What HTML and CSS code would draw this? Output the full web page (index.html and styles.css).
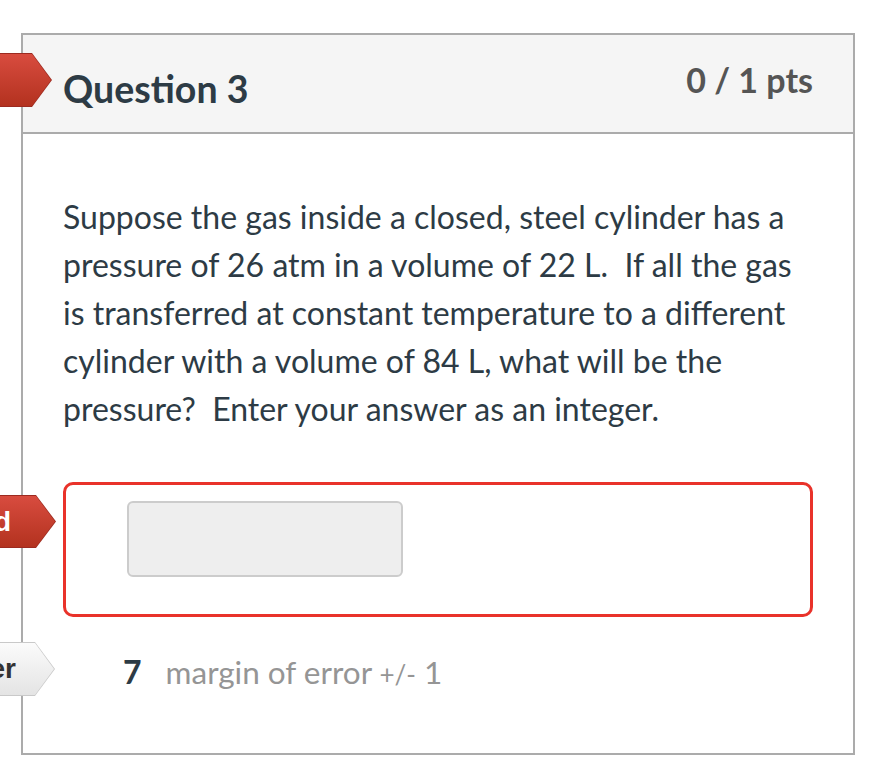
FILE: index.html
```html
<!DOCTYPE html>
<html lang="en">
<head>
<meta charset="utf-8">
<title>Question 3</title>
<link rel="stylesheet" href="styles.css">
</head>
<body>
<div class="question">
  <div class="q-header">
    <span class="tag tag-red tag-incorrect"><span class="tag-inner">Incorrect</span></span>
    <h2 class="q-title">Question 3</h2>
    <div class="q-points">0 / 1 pts</div>
  </div>
  <div class="q-text">
    <p>Suppose the gas inside a closed, steel cylinder has a pressure of 26 atm in a volume of 22 L.&nbsp; If all the gas is transferred at constant temperature to a different cylinder with a volume of 84 L, what will be the pressure?&nbsp; Enter your answer as an integer.</p>
  </div>
  <div class="answer-wrap">
    <span class="tag tag-red tag-answered"><span class="tag-inner">You Answered</span></span>
    <div class="answer-box">
      <div class="answer-input"></div>
    </div>
  </div>
  <div class="correct-row">
    <span class="tag tag-gray tag-correct"><span class="tag-inner">Correct Answer</span></span>
    <span class="correct-value">7</span>
    <span class="margin-text">margin of error <span class="pm">+/-</span> 1</span>
  </div>
</div>
</body>
</html>
```

FILE: styles.css
```css
html, body {
  margin: 0;
  padding: 0;
  background: #ffffff;
}

body {
  font-family: Lato, "Open Sans", sans-serif;
  color: #2d3b45;
  overflow: hidden;
}

.question {
  position: relative;
  box-sizing: border-box;
  width: 834px;
  height: 722px;
  margin: 33px 0 0 21px;
  border: 2px solid #ababab;
}

.q-header {
  position: relative;
  display: flex;
  justify-content: space-between;
  align-items: flex-start;
  background: #f5f5f5;
  border-bottom: 2px solid #ababab;
  padding: 25px 40px 21px 40px;
}

.q-title {
  margin: 6px 0 0 0;
  font-size: 37.5px;
  line-height: 45px;
  font-weight: 700;
  color: #2d3b45;
}

.q-points {
  font-size: 34px;
  line-height: 40px;
  font-weight: 700;
  color: #555555;
}

.q-text {
  padding: 0 40px;
  margin-top: 59px;
}

.q-text p {
  margin: 0;
  font-size: 32px;
  line-height: 48px;
  color: #2d3b45;
}

.answer-wrap {
  position: relative;
  margin-top: 49px;
  padding: 0 40px;
}

.answer-box {
  box-sizing: border-box;
  height: 135px;
  border: 3px solid #e9322a;
  border-radius: 10px;
  padding: 16px 0 0 61px;
}

.answer-input {
  box-sizing: border-box;
  width: 276px;
  height: 76px;
  background: #eeeeee;
  border: 2px solid #cccccc;
  border-radius: 6px;
}

.correct-row {
  position: relative;
  margin-top: 31px;
  padding-left: 100px;
  display: flex;
  align-items: baseline;
  gap: 24px;
  line-height: 48px;
}

.correct-value {
  font-size: 32px;
  font-weight: 700;
  color: #2d3b45;
}

.margin-text {
  font-size: 31.5px;
  color: #959595;
}

.margin-text .pm {
  font-size: 26px;
}

/* Arrow tags sticking out to the left of the card */
.tag {
  position: absolute;
  width: 260px;
  height: 54px;
  padding: 1px;
  box-sizing: border-box;
  clip-path: polygon(0 0, calc(100% - 20px) 0, 100% 50%, calc(100% - 20px) 100%, 0 100%);
  font-family: "Liberation Sans", Arial, sans-serif;
  font-weight: 700;
  font-size: 28px;
}

.tag-inner {
  display: flex;
  align-items: center;
  justify-content: flex-end;
  box-sizing: border-box;
  height: 100%;
  padding-right: 42px;
  clip-path: polygon(0 0, calc(100% - 19px) 0, 100% 50%, calc(100% - 19px) 100%, 0 100%);
}

.tag-red {
  background: #9c2a20;
}

.tag-red .tag-inner {
  background: linear-gradient(#d84c3f, #b3321f);
  color: #ffffff;
}

.tag-gray {
  background: #c9c9c9;
}

.tag-gray .tag-inner {
  background: linear-gradient(#fbfbfb, #e4e4e4);
  color: #333333;
}

.tag-incorrect {
  top: 18px;
  right: calc(100% - 29px);
}

.tag-incorrect .tag-inner {
  padding-right: 62px;
}

.tag-answered {
  top: 13px;
  height: 53px;
  right: calc(100% - 33px);
}

.tag-answered .tag-inner {
  padding-right: 44px;
}

.tag-correct {
  top: -6px;
  right: calc(100% - 32px);
}

.tag-correct .tag-inner {
  padding-right: 38px;
}
```
